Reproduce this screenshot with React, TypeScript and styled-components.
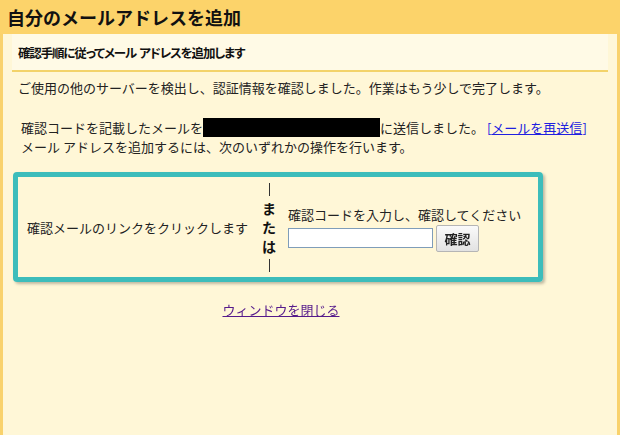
import React, { useState } from 'react';
import styled, { createGlobalStyle } from 'styled-components';

const GlobalStyle = createGlobalStyle`
  html, body {
    margin: 0;
    padding: 0;
    background: #fff7d7;
  }
  body {
    font-family: 'Noto Sans CJK JP', 'Noto Sans', sans-serif;
    color: #222;
  }
`;

const Page = styled.div`
  width: 620px;
  height: 435px;
  display: flex;
  flex-direction: column;
  overflow: hidden;
`;

const Header = styled.div`
  height: 34px;
  flex: none;
  background: #fcd36a;
  display: flex;
  align-items: center;
  padding-left: 7px;
  font-size: 18px;
  font-weight: 700;
  color: #111;
`;

const Panel = styled.div`
  flex: 1;
  background: #fff7d7;
  border-left: 3px solid #f9d26c;
  border-right: 3px solid #f9d26c;
  padding: 0 9px;
`;

const SubHeader = styled.div`
  height: 36px;
  display: flex;
  align-items: center;
  padding-left: 6px;
  background: #fffae6;
  border-bottom: 2px solid #f3d36a;
  font-size: 12.5px;
  font-weight: 700;
  font-feature-settings: 'palt';
  letter-spacing: -1.15px;
  color: #111;
  white-space: pre;
`;

const Body = styled.div`
  padding-top: 6px;
  font-size: 13px;
  line-height: 19px;
  color: #222;
`;

const Para = styled.p<{ gap?: number; indent: number }>`
  margin: 0 0 ${p => p.gap ?? 0}px 0;
  padding-left: ${p => p.indent}px;
`;

const Redacted = styled.span`
  display: inline-block;
  width: 177px;
  height: 19px;
  background: #000;
  vertical-align: top;
`;

const ResendLink = styled.a`
  color: #2020e0;
  text-decoration: underline;
  cursor: pointer;
`;

const Bracket = styled.span`
  color: #2020e0;
`;

const ChoiceBox = styled.div`
  margin: 16px 0 0 1px;
  width: 520px;
  height: 100px;
  border: 5px solid #3dbdbb;
  border-radius: 4px;
  box-shadow: 2px 2px 3px rgba(0, 0, 0, 0.25);
  display: flex;
  align-items: center;
  font-size: 13px;
  color: #222;
`;

const LeftOption = styled.div`
  width: 236px;
  padding-left: 9px;
  box-sizing: border-box;
`;

const OrColumn = styled.div`
  width: 30px;
  display: flex;
  flex-direction: column;
  align-items: center;
  font-size: 14px;
  font-weight: 700;
  line-height: 19px;
  color: #111;
`;

const Bar = styled.span`
  display: block;
  width: 1px;
  height: 13px;
  margin: 3px 0;
  background: #333;
`;

const RightOption = styled.div`
  display: flex;
  flex-direction: column;
  padding-left: 4px;
  padding-top: 2px;
`;

const InputRow = styled.div`
  display: flex;
  align-items: center;
  gap: 3px;
  margin-top: 1px;
`;

const CodeInput = styled.input`
  width: 145px;
  height: 20px;
  box-sizing: border-box;
  border: 1px solid #7f9db9;
  background: #fff;
  padding: 0 2px;
  font-size: 13px;
  outline: none;
`;

const ConfirmButton = styled.button`
  width: 43px;
  height: 27px;
  box-sizing: border-box;
  border: 1px solid #b5b5b5;
  border-radius: 2px;
  background: linear-gradient(#fafafa, #e2e2e2);
  font-family: 'Noto Sans CJK JP', sans-serif;
  font-size: 13px;
  font-weight: 700;
  color: #222;
  padding: 0;
  cursor: pointer;
`;

const CloseRow = styled.div`
  width: 530px;
  margin-top: 18px;
  padding-left: 8px;
  box-sizing: border-box;
  text-align: center;
  font-size: 13px;
`;

const CloseLink = styled.a`
  color: #551a8b;
  text-decoration: underline;
  cursor: pointer;
`;

export default function App() {
  const [code, setCode] = useState('');

  return (
    <Page>
      <GlobalStyle />
      <Header>自分のメールアドレスを追加</Header>
      <Panel>
        <SubHeader>{'確認手順に従ってメール  アドレスを追加します'}</SubHeader>
        <Body>
          <Para gap={21} indent={6}>
            ご使用の他のサーバーを検出し、認証情報を確認しました。作業はもう少しで完了します。
          </Para>
          <Para indent={9}>
            確認コードを記載したメールを<Redacted />に送信しました。{' '}
            <Bracket>[</Bracket>
            <ResendLink>メールを再送信</ResendLink>
            <Bracket>]</Bracket>
            <br />
            メール アドレスを追加するには、次のいずれかの操作を行います。
          </Para>
          <ChoiceBox>
            <LeftOption>確認メールのリンクをクリックします</LeftOption>
            <OrColumn>
              <Bar />
              <span>ま</span>
              <span>た</span>
              <span>は</span>
              <Bar />
            </OrColumn>
            <RightOption>
              <span>確認コードを入力し、確認してください</span>
              <InputRow>
                <CodeInput value={code} onChange={e => setCode(e.target.value)} autoFocus />
                <ConfirmButton>確認</ConfirmButton>
              </InputRow>
            </RightOption>
          </ChoiceBox>
          <CloseRow>
            <CloseLink>ウィンドウを閉じる</CloseLink>
          </CloseRow>
        </Body>
      </Panel>
    </Page>
  );
}
